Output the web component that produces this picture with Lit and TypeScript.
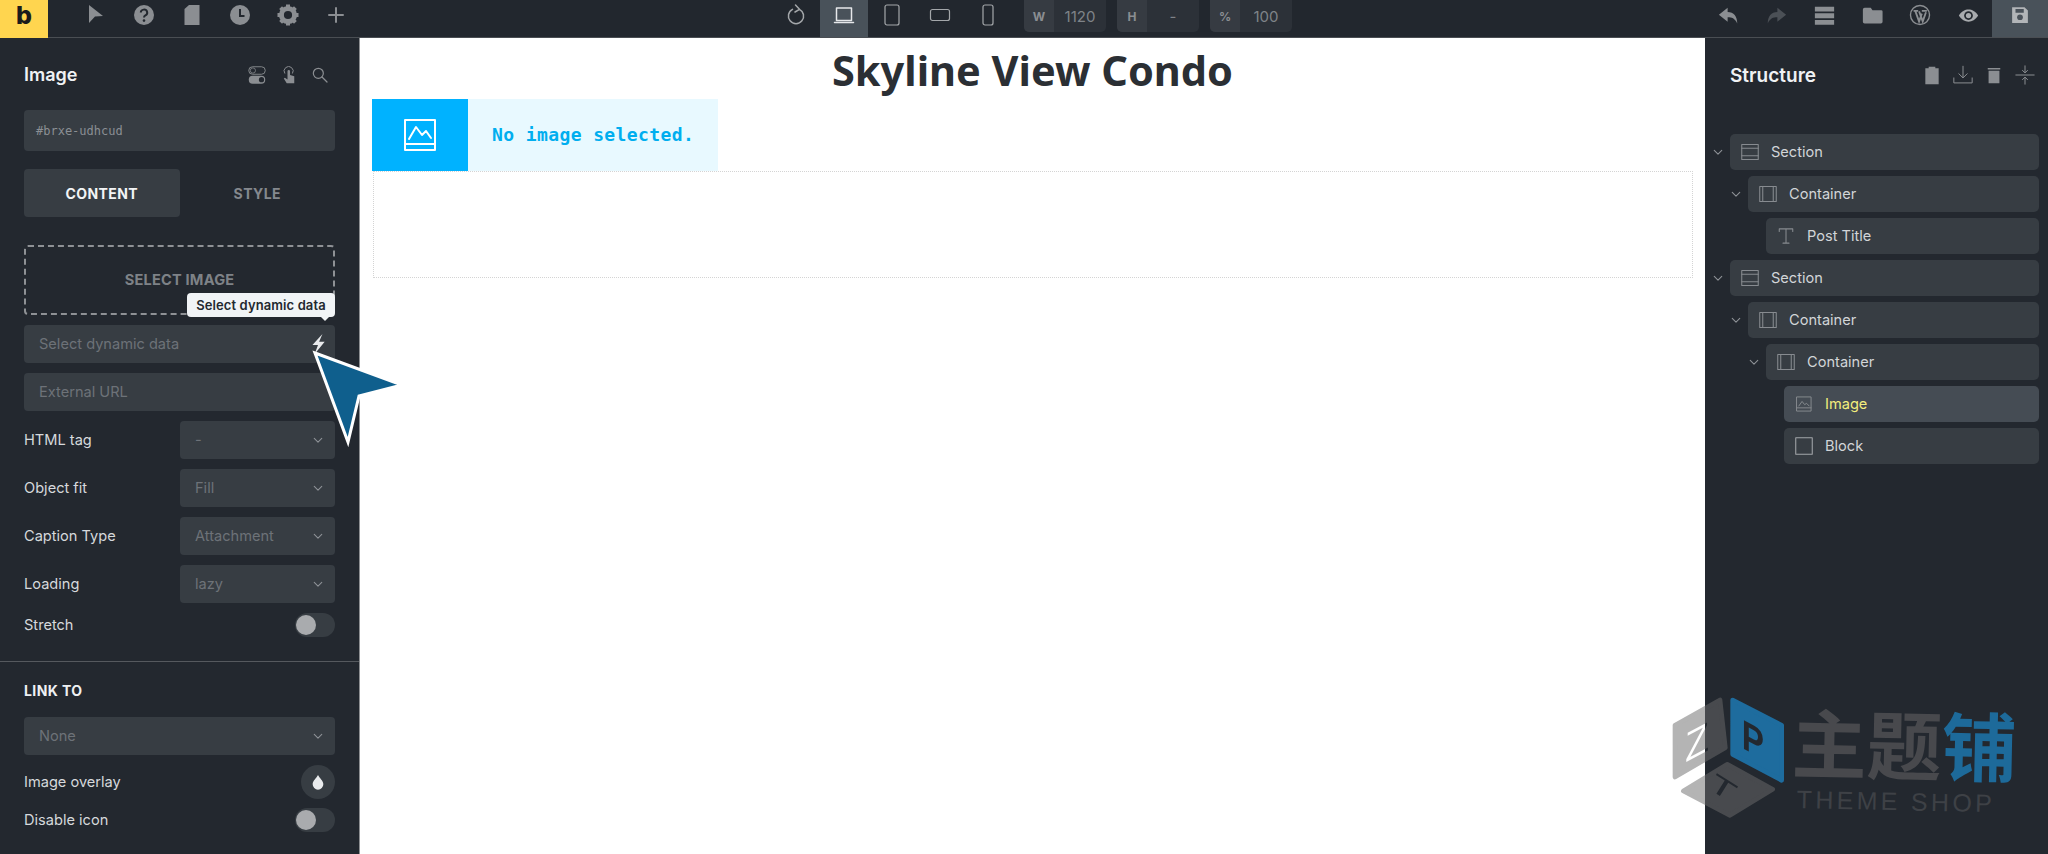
import { LitElement, html, css, svg } from "lit";
import { customElement } from "lit/decorators.js";
import { styleMap } from "lit/directives/style-map.js";

const G = "#8b8e92";
const I = (size: number, body: unknown, vb = "0 0 24 24") =>
  html`<svg width=${size} height=${size} viewBox=${vb} aria-hidden="true">${body}</svg>`;
const stroke = (inner: unknown, c = G, w = 1.3) =>
  svg`<g fill="none" stroke=${c} stroke-width=${w} stroke-linecap="round" stroke-linejoin="round">${inner}</g>`;

const icons: Record<string, () => unknown> = {
  cursor: () => I(24, svg`<path d="M5 2 L19 13 L11 13.5 L5 20 Z" fill=${G}/>`),
  help: () => I(24, svg`<circle cx="12" cy="12" r="10" fill=${G}/><path d="M8.8 9.5a3.2 3 0 1 1 4.6 2.8c-1 .6-1.4 1-1.4 2.2" fill="none" stroke="#23282f" stroke-width="2"/><circle cx="12" cy="17.6" r="1.3" fill="#23282f"/>`),
  doc: () => I(24, svg`<path d="M9 2 H19.5 V22 H4.5 V6 Z" fill=${G}/>`),
  clock: () => I(24, svg`<circle cx="12" cy="12" r="10" fill=${G}/><path d="M12 6 V13 H16.5" fill="none" stroke="#23282f" stroke-width="2"/>`),
  gear: () => I(24, svg`<circle cx="12" cy="12" r="6.6" fill="none" stroke=${G} stroke-width="5"/><g stroke=${G} stroke-width="4"><path d="M12 1.5V5M12 19v3.5M1.5 12H5M19 12h3.5M4.6 4.6l2.5 2.5M16.9 16.9l2.5 2.5M4.6 19.4l2.5-2.5M16.9 7.1l2.5-2.5"/></g>`),
  plus: () => I(24, stroke(svg`<path d="M12 5V19M5 12H19"/>`, G, 2)),
  reload: () => I(24, stroke(svg`<path d="M15.5 6.3a7.6 7.6 0 1 1-7 0M11.5 2 L15.5 6.3 L11 9"/>`, "#a4a7aa", 1.5)),
  laptop: () => I(24, stroke(svg`<rect x="4.5" y="5" width="15" height="12.5"/><path d="M2.5 19.5H21.5"/>`, "#e6e8ea", 1.5)),
  tablet: () => I(24, stroke(svg`<rect x="5" y="2" width="14" height="20" rx="2"/>`, "#a4a7aa", 1.2)),
  landscape: () => I(24, stroke(svg`<rect x="2.5" y="6.5" width="19" height="11" rx="2"/>`, "#a4a7aa", 1.2)),
  mobile: () => I(24, stroke(svg`<rect x="7" y="2" width="10" height="20" rx="2"/>`, "#a4a7aa", 1.2)),
  undo: () => I(21, svg`<path d="M1 11 L11 3 V8 C18 8 22 13 22 21 C19 15 16 14 11 14 V19 Z" fill=${G}/>`),
  redo: () => I(21, svg`<path d="M23 11 L13 3 V8 C6 8 2 13 2 21 C5 15 8 14 13 14 V19 Z" fill="#4b5056"/>`),
  layers: () => I(21, svg`<path d="M1 2H23V7.5H1ZM1 9.5H23V15H1ZM1 17H23V22.5H1Z" fill=${G}/>`),
  folder: () => I(21, svg`<path d="M3 3H10L12 6H22a1.5 1.5 0 0 1 1.5 1.5V19a2 2 0 0 1-2 2H3a2 2 0 0 1-2-2V5a2 2 0 0 1 2-2Z" fill=${G}/>`),
  wp: () => I(22, svg`<circle cx="12" cy="12" r="10.4" fill="none" stroke=${G} stroke-width="1.5"/><path d="M5 7.5H10M14 7.5H19.5M7 8L11 19L14 10.5M11 8L15 19L18.5 9" fill="none" stroke=${G} stroke-width="2"/>`),
  eye: () => I(21, svg`<path d="M1 12C4 7 8 5 12 5S20 7 23 12C20 17 16 19 12 19S4 17 1 12Z" fill="#a8abae"/><circle cx="12" cy="12" r="5" fill="#23282f"/><circle cx="12" cy="12" r="3" fill="#a8abae"/>`),
  save: () => I(18, svg`<path d="M1.5 1.5H18L22.5 6V22.5H1.5Z" fill="#b2b5b8"/><rect x="6" y="4" width="11" height="5" fill="#4a525a"/><circle cx="12" cy="15" r="3.8" fill="#4a525a"/>`),
  toggles: () => I(18, svg`<rect x="1" y="1" width="22" height="10" rx="5" fill="none" stroke=${G} stroke-width="1.2"/><circle cx="6.5" cy="6" r="3.5" fill="none" stroke=${G}/><rect x="1" y="13" width="22" height="10.5" rx="5.2" fill=${G}/><circle cx="18" cy="18.2" r="3.5" fill="#23282f"/>`),
  touch: () => I(18, svg`<path d="M7 11a6 6 0 1 1 10 0" fill="none" stroke=${G} stroke-width="1.3" transform="translate(-.5 -1)"/><path d="M10 7a1.7 1.7 0 0 1 3.4 0V12L19 13.5V23H9L5 16.5L6.5 15.5L10 18Z" fill=${G}/>`),
  search: () => I(16, stroke(svg`<circle cx="9.5" cy="9.5" r="7.5"/><path d="M15 15L22.5 22.5"/>`, G, 1.8)),
  clipboard: () => I(20, svg`<path d="M8 2H16V4H20V23H4V4H8Z" fill=${G}/>`),
  download: () => I(20, stroke(svg`<path d="M12 1.5V15M7 10.5L12 15.5L17 10.5M1 15.5V21.5H23V15.5"/>`, G, 1.2)),
  trash: () => I(20, svg`<path d="M4.5 3.5H19.5V5.5H4.5ZM5.5 7H18.5V22H5.5Z" fill=${G}/>`),
  collapse: () => I(20, stroke(svg`<path d="M1 12H23M12 1V9M9 6.5L12 9.5L15 6.5M12 23V15M9 17.5L12 14.5L15 17.5"/>`, G, 1.2)),
  bolt: () => I(20, svg`<path d="M13 0 L4 10 H9 L6 18 L15 7 H10 Z" fill="#e8eaec"/>`, "0 0 18 18"),
  drop: () => I(16, svg`<path d="M12 1.5C14 6 20 10 20 15.5a8 8 0 0 1-16 0C4 10 10 6 12 1.5Z" fill="#e9ebed"/>`),
  chevron: () => I(10, stroke(svg`<path d="M3 8L12 17L21 8"/>`, "#8d9196", 2.6)),
  section: () => I(18, stroke(svg`<rect x="1" y="2" width="22" height="20"/><path d="M1 7H23M1 17H23"/>`, "#878b90", 1.4)),
  container: () => I(18, stroke(svg`<rect x="1" y="2" width="22" height="20"/><path d="M5 2V22M19 2V22"/>`, "#878b90", 1.4)),
  text: () => I(18, stroke(svg`<path d="M3 6V2.5H21V6M12 2.5V21.5M8 21.5H16"/>`, "#878b90", 1.4)),
  image: () => I(18, stroke(svg`<rect x="1" y="1" width="22" height="22"/><path d="M1 18H23M4 15L9 8L13 13L16 11L20 15"/>`, "#878b90", 1.5), "-2 -2 28 28"),
  block: () => I(18, stroke(svg`<rect x="1" y="1" width="22" height="22"/>`, "#a3a6aa", 1.4)),
  picture: () => I(32, stroke(svg`<rect x="1" y="1" width="30" height="30"/><path d="M1 25H31M5 20L12 8L18 16L22 12L27 19"/>`, "#fff", 2), "0 0 32 32"),
};

const selects = [
  ["HTML tag", "-"],
  ["Object fit", "Fill"],
  ["Caption Type", "Attachment"],
  ["Loading", "lazy"],
];
const tree = [
  ["section", "Section", 0, true],
  ["container", "Container", 1, true],
  ["text", "Post Title", 2, false],
  ["section", "Section", 0, true],
  ["container", "Container", 1, true],
  ["container", "Container", 2, true],
  ["image", "Image", 3, false],
  ["block", "Block", 3, false],
] as const;

@customElement("app-root")
export class AppRoot extends LitElement {
  static styles = css`
    :host { display: block; height: 854px; overflow: hidden; position: relative; font-family: Inter, "Noto Sans", sans-serif; color: #d6d9dc; font-size: 14.6px; }
    svg { display: block; }
    .top { height: 37px; background: #22272e; border-bottom: 1px solid #4a4e53; display: flex; align-items: stretch; }
    .logo { width: 48px; height: 38px; background: #ffd54f; color: #1b1b1b; font-family: Inter, sans-serif; font-weight: 800; font-size: 25px; text-align: center; flex: none; }
    .tool { width: 48px; display: flex; align-items: center; justify-content: center; flex: none; padding-bottom: 7px; box-sizing: border-box; }
    .left { display: flex; padding-left: 24px; }
    .center { display: flex; margin-left: 412px; }
    .on { background: #49525a; }
    .dim { display: flex; height: 32px; width: 82px; border-radius: 0 0 5px 5px; overflow: hidden; background: #2c3138; margin-left: 11px; color: #7f8388; font-size: 15px; }
    .dim b { width: 30px; background: #363b42; display: flex; align-items: center; justify-content: center; font-size: 12px; color: #8b8e92; }
    .dim span { flex: 1; display: flex; align-items: center; justify-content: center; }
    .dim.first { margin-left: 12px; }
    .right { display: flex; margin-left: auto; }
    .right .save { width: 56px; }
    .main { display: flex; height: 816px; }
    .panel-l { flex: none; background: #23282f; padding: 19px 24px 0; box-sizing: border-box; border-right: 1px solid #8d8f92; width: 360px; }
    .panel-l span { padding-bottom: 1px; }
    .panel-l .head h2 { padding-bottom: 2px; }
    .head { display: flex; align-items: center; height: 36px; }
    .head h2 { margin: 0; font-size: 18px; font-weight: 600; color: #f0f2f4; flex: 1; }
    .head .ics { display: flex; align-items: center; }
    .left-ics { gap: 14px; margin-right: 7px; }
    .field { height: 38px; background: #373d43; border-radius: 4px; display: flex; align-items: center; padding: 0 12px 0 15px; margin-top: 10px; color: #6d7278; box-sizing: border-box; }
    .bolt { margin-right: -5px; }
    .id { height: 41px; margin-top: 17px; padding-left: 12px; font: 12px "DejaVu Sans Mono", monospace; color: #8b8f94; }
    .field span { flex: 1; }
    .tabs { display: flex; margin-top: 18px; height: 48px; }
    .tabs div { flex: 1; display: flex; align-items: center; justify-content: center; font-weight: 700; font-size: 14px; letter-spacing: .4px; color: #85898e; border-radius: 4px; }
    .tabs .act { background: #373d43; color: #f2f4f5; }
    .drop { margin-top: 28px; height: 70px; border: 2px dashed #8e9195; border-radius: 4px; box-sizing: border-box; display: flex; align-items: center; justify-content: center; font-weight: 700; color: #7e8287; letter-spacing: .2px; padding-bottom: 1px; }
    .row { display: flex; align-items: center; justify-content: space-between; margin-top: 10px; height: 38px; }
    .row .field { width: 155px; margin: 0; }
    .row .field span { flex: 1; }
    .tight { height: 24px; }
    .toggle { width: 40px; height: 24px; border-radius: 12px; background: #373d43; position: relative; flex: none; }
    .toggle::before { content: ""; position: absolute; left: 1px; top: 2px; width: 20px; height: 20px; border-radius: 50%; background: #a9abae; }
    .divider { height: 1px; background: #55595e; margin: 24px -24px 0; }
    h3 { margin: 20px 0 0; font-size: 14px; line-height: 17px; font-weight: 700; color: #eef0f2; letter-spacing: .4px; }
    .link { margin-top: 18px; }
    .round { width: 34px; height: 34px; border-radius: 50%; background: #373d43; display: flex; align-items: center; justify-content: center; flex: none; }
    .r34 { height: 34px; }
    .r24 { height: 24px; margin-top: 9px; }
    .canvas { flex: 1; background: #fff; padding: 0 12px; min-width: 0; }
    h1 { margin: 0; padding-top: 4px; font: 700 41.5px/57px "Noto Sans", sans-serif; text-align: center; color: #2b2f34; }
    .ph { display: flex; width: 346px; height: 72px; background: #e8f9ff; }
    .ph .ic { width: 96px; background: #00b2ff; display: flex; align-items: center; justify-content: center; flex: none; }
    .ph .msg { font: 700 18px "DejaVu Sans Mono", monospace; color: #00aeef; display: flex; align-items: center; padding: 0 0 2px 24px; white-space: nowrap; letter-spacing: .4px; }
    .box { height: 107px; border: 1px dotted #d4d4d4; box-sizing: border-box; width: 1320px; margin-left: 1px; }
    .panel-r { width: 343px; flex: none; background: #23282f; box-sizing: border-box; padding: 19px 9px 0 25px; }
    .panel-r .head { padding-right: 4px; }
    .panel-r .ics { gap: 11px; }
    .panel-r h2 { font-size: 19px; }
    .tree { margin-top: 41px; display: flex; flex-direction: column; gap: 6px; }
    .node { height: 36px; display: flex; align-items: center; background: #373d43; border-radius: 5px; position: relative; padding-left: 11px; gap: 12px; color: #d2d5d8; }
    .node .lbl { line-height: 36px; }
    .node .car { position: absolute; left: -17px; width: 10px; top: 13px; }
    .node.sel { background: #454c54; }
    .node.sel .lbl { color: #f3ee7d; }
    .tip { position: absolute; left: 187px; top: 293px; width: 148px; height: 24px; background: #f1f4f6; color: #23282f; border-radius: 4px; font-size: 13px; letter-spacing: .1px; font-weight: 600; display: flex; align-items: center; justify-content: center; white-space: nowrap; }
    .tip::after { content: ""; position: absolute; right: 6px; bottom: -4px; border: 4px solid transparent; border-bottom: 0; border-top-color: #f1f4f6; }
    .arrow { position: absolute; left: 305px; top: 345px; }
    .mark { position: absolute; left: 1670px; top: 696px; }
    .wm { position: absolute; left: 1793px; top: 694px; transform: rotate(1.2deg); transform-origin: left top; white-space: nowrap; }
    .wm .cn { font: 700 75px/92px "Noto Sans CJK SC", sans-serif; color: #48494d; }
    .wm .cn i { font-style: normal; color: #1d6a9a; }
    .wm .en { font: 400 25px/28px "Liberation Sans", sans-serif; letter-spacing: 3.3px; color: #3e4146; margin: -1px 0 0 6px; }
  `;

  private pick(name: string) { return icons[name](); }

  render() {
    return html`
      <header class="top">
        <div class="logo">b</div>
        <div class="left">
          ${["cursor", "help", "doc", "clock", "gear", "plus"].map((n) => html`<div class="tool">${this.pick(n)}</div>`)}
        </div>
        <div class="center">
          ${["reload", "laptop", "tablet", "landscape", "mobile"].map((n) => html`<div class="tool ${n === "laptop" ? "on" : ""}">${this.pick(n)}</div>`)}
          <div class="dim first"><b>W</b><span>1120</span></div>
          <div class="dim"><b>H</b><span>-</span></div>
          <div class="dim"><b>%</b><span>100</span></div>
        </div>
        <div class="right">
          ${["undo", "redo", "layers", "folder", "wp", "eye"].map((n) => html`<div class="tool">${this.pick(n)}</div>`)}
          <div class="tool save on">${this.pick("save")}</div>
        </div>
      </header>
      <div class="main">
        <aside class="panel-l">
          <div class="head"><h2>Image</h2><div class="ics left-ics">${this.pick("toggles")}${this.pick("touch")}${this.pick("search")}</div></div>
          <div class="field id">#brxe-udhcud</div>
          <div class="tabs"><div class="act">CONTENT</div><div>STYLE</div></div>
          <div class="drop">SELECT IMAGE</div>
          <div class="field"><span>Select dynamic data</span><div class="bolt">${this.pick("bolt")}</div></div>
          <div class="field"><span>External URL</span></div>
          ${selects.map(([l, v]) => html`<div class="row"><span>${l}</span><div class="field"><span>${v}</span>${this.pick("chevron")}</div></div>`)}
          <div class="row tight"><span>Stretch</span><div class="toggle"></div></div>
          <div class="divider"></div>
          <h3>LINK TO</h3>
          <div class="field link"><span>None</span>${this.pick("chevron")}</div>
          <div class="row r34"><span>Image overlay</span><div class="round">${this.pick("drop")}</div></div>
          <div class="row r24"><span>Disable icon</span><div class="toggle"></div></div>
        </aside>
        <main class="canvas">
          <h1>Skyline View Condo</h1>
          <div class="ph"><div class="ic">${this.pick("picture")}</div><div class="msg">No image selected.</div></div>
          <div class="box"></div>
        </main>
        <aside class="panel-r">
          <div class="head"><h2>Structure</h2><div class="ics">${["clipboard", "download", "trash", "collapse"].map((n) => this.pick(n))}</div></div>
          <div class="tree">
            ${tree.map(([ic, label, depth, open]) => html`
              <div class="node ${label === "Image" ? "sel" : ""}" style=${styleMap({ marginLeft: `${depth * 18}px` })}>
                ${open ? html`<span class="car">${this.pick("chevron")}</span>` : ""}
                ${this.pick(ic)}<span class="lbl">${label}</span>
              </div>`)}
          </div>
        </aside>
      </div>
      <div class="tip">Select dynamic data</div>
      <svg class="arrow" width="105" height="105" viewBox="305 345 105 105">
        <path d="M315 353 L402 385 L359 396 L348 442 Z" fill="#0f5f8d" stroke="#fff" stroke-width="3" stroke-linejoin="miter"/>
      </svg>
      <svg class="mark" width="120" height="128" viewBox="90 50 360 384">
        <defs>
          <mask id="cut" maskUnits="userSpaceOnUse" x="0" y="0" width="500" height="500">
            <rect width="500" height="500" fill="#fff"/>
            <text x="0" y="0" font-family="Liberation Sans" font-size="125" fill="#000" transform="translate(135 250) skewY(-28) scale(.95 1)">Z</text>
            <text x="0" y="0" font-family="Liberation Sans" font-weight="700" font-size="125" fill="#000" transform="translate(305 205) skewY(28) scale(.8 1)">P</text>
            <text x="0" y="0" font-family="Liberation Sans" font-size="110" fill="#000" transform="translate(200 325) rotate(32) scale(1.2 .7)">T</text>
          </mask>
        </defs>
        <g mask="url(#cut)">
          <g opacity=".51" fill="#6c6c6c" stroke="#6c6c6c" stroke-width="14" stroke-linejoin="round">
            <path d="M105 138 L240 62 L256 205 L105 293 Z"/>
            <path d="M130 335 L262 255 L398 330 L270 408 Z"/>
          </g>
          <path d="M278 62 L425 138 V303 L278 225 Z" fill="#1e6c9e" stroke="#1e6c9e" stroke-width="14" stroke-linejoin="round"/>
        </g>
      </svg>
      <div class="wm">
        <div class="cn">主题<i>铺</i></div>
        <div class="en">THEME SHOP</div>
      </div>
    `;
  }
}
